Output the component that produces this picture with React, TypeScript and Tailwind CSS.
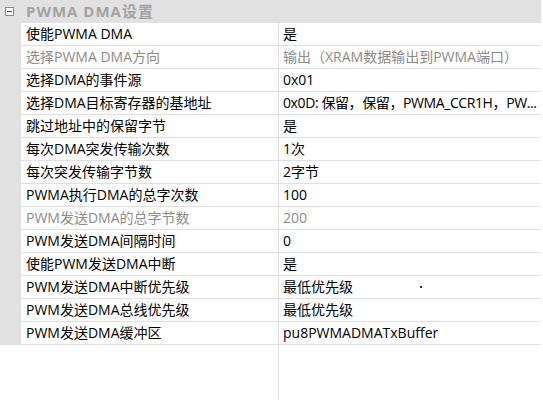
const ROWS: { label: string; value: string; disabled?: boolean; tight?: boolean }[] = [
  { label: "使能PWMA DMA", value: "是" },
  { label: "选择PWMA DMA方向", value: "输出（XRAM数据输出到PWMA端口）", disabled: true },
  { label: "选择DMA的事件源", value: "0x01" },
  { label: "选择DMA目标寄存器的基地址", value: "0x0D: 保留，保留，PWMA_CCR1H，PW...", tight: true },
  { label: "跳过地址中的保留字节", value: "是" },
  { label: "每次DMA突发传输次数", value: "1次" },
  { label: "每次突发传输字节数", value: "2字节" },
  { label: "PWMA执行DMA的总字次数", value: "100" },
  { label: "PWM发送DMA的总字节数", value: "200", disabled: true },
  { label: "PWM发送DMA间隔时间", value: "0" },
  { label: "使能PWM发送DMA中断", value: "是" },
  { label: "PWM发送DMA中断优先级", value: "最低优先级" },
  { label: "PWM发送DMA总线优先级", value: "最低优先级" },
  { label: "PWM发送DMA缓冲区", value: "pu8PWMADMATxBuffer" },
];

export default function App() {
  return (
    <div
      className="relative w-[543px] h-[400px] overflow-hidden bg-white text-[14px] leading-none"
      style={{ fontFamily: '"Open Sans", "Noto Sans CJK SC", sans-serif' }}
    >
      {/* category header */}
      <div className="flex items-center h-[23px] bg-[#e1e1e1] mr-[2px]">
        <div className="w-[26px] flex justify-center pl-[1px]">
          <div className="w-[9px] h-[9px] border border-[#8a8a8a] bg-white flex items-center justify-center -ml-[9px]">
            <div className="w-[5px] h-[1px] bg-[#555]" />
          </div>
        </div>
        <span className="font-bold text-[15px] tracking-[1px] text-[#a3a3a3]">PWMA DMA设置</span>
      </div>

      {ROWS.map((r, i) => (
        <div key={i} className="flex h-[23px]">
          <div className="w-[21px] shrink-0 bg-[#e1e1e1]" />
          <div
            className={`w-[258px] shrink-0 flex items-center pl-[5px] border-b border-r border-[#e0e0e0] ${
              r.disabled ? "text-[#8c8c8c]" : "text-[#000]"
            }`}
          >
            {r.label}
          </div>
          <div
            className={`w-[262px] shrink-0 flex items-center pl-[4px] border-b border-[#e0e0e0] whitespace-nowrap ${
              r.disabled ? "text-[#8c8c8c]" : "text-[#000]"
            } ${r.tight ? "tracking-[-0.4px]" : ""}`}
          >
            {r.value}
          </div>
        </div>
      ))}

      <div className="flex h-[60px]">
        <div className="w-[279px] shrink-0 border-r border-[#e0e0e0]" />
      </div>

      {/* stray pixel */}
      <div className="absolute left-[420px] top-[286px] w-[2px] h-[2px] bg-[#333]" />
    </div>
  );
}
